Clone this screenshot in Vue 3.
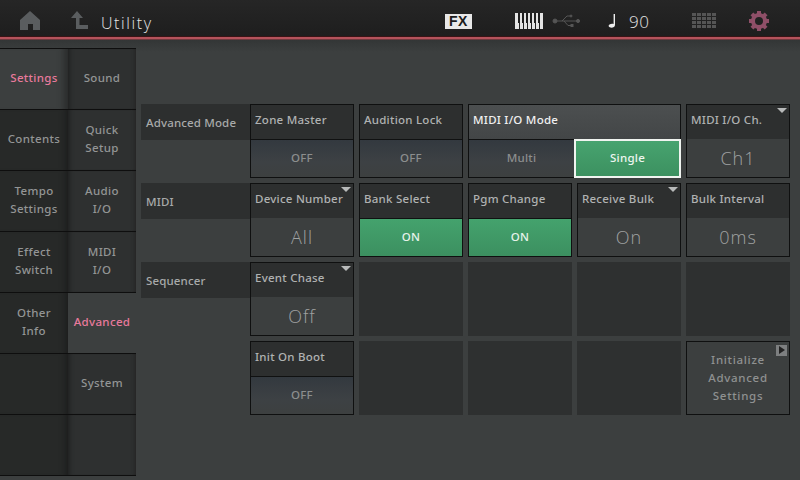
<script setup>
const col1 = [
  { t: ['Settings'], active: true }, { t: ['Contents'] }, { t: ['Tempo', 'Settings'] },
  { t: ['Effect', 'Switch'] }, { t: ['Other', 'Info'] }, { t: [] }, { t: [] }
]
const col2 = [
  { t: ['Sound'] }, { t: ['Quick', 'Setup'] }, { t: ['Audio', 'I/O'] }, { t: ['MIDI', 'I/O'] },
  { t: ['Advanced'], active: true }, { t: ['System'] }, { t: [] }
]
const rows = [
  { label: 'Advanced Mode', cells: [
    { h: 'Zone Master', v: 'OFF', k: 'off' },
    { h: 'Audition Lock', v: 'OFF', k: 'off' },
    { mode: true },
    { h: 'MIDI I/O Ch.', v: 'Ch1', k: 'big', menu: true }
  ] },
  { label: 'MIDI', cells: [
    { h: 'Device Number', v: 'All', k: 'big', menu: true },
    { h: 'Bank Select', v: 'ON', k: 'on' },
    { h: 'Pgm Change', v: 'ON', k: 'on' },
    { h: 'Receive Bulk', v: 'On', k: 'big', menu: true },
    { h: 'Bulk Interval', v: '0ms', k: 'big' }
  ] },
  { label: 'Sequencer', cells: [
    { h: 'Event Chase', v: 'Off', k: 'big', menu: true },
    { empty: true }, { empty: true }, { empty: true }, { empty: true }
  ] },
  { label: '', cells: [
    { h: 'Init On Boot', v: 'OFF', k: 'off' },
    { empty: true }, { empty: true }, { empty: true },
    { init: true }
  ] }
]
const keys = [0, 1, 2, 3, 4, 5, 6]
</script>

<template>
  <div class="screen">
    <header class="top">
      <svg class="home" width="22" height="22" viewBox="0 0 22 22"><path d="M11 1 L21 10 V20 H14 V14 H9 V20 H1 V10 Z" fill="#5a5d5f"/></svg>
      <svg class="up" width="20" height="22" viewBox="0 0 20 22"><path d="M8 1 L14 8 H10.5 V15 H19 V19 H7 V8 H2 Z" fill="#5a5d5f"/></svg>
      <span class="title">Utility</span>
      <span class="fx">FX</span>
      <svg class="piano" width="28" height="16" viewBox="0 0 28 16">
        <rect width="28" height="16" fill="#e4e4e4"/>
        <g fill="#1f1f1f">
          <rect v-for="x in [3, 7, 11, 15, 19, 23]" :key="x" :x="x" y="0" width="2" height="10"/>
          <rect v-for="x in [4, 8, 12, 16, 20, 24]" :key="'l' + x" :x="x" y="10" width="1" height="6"/>
        </g>
      </svg>
      <svg class="usb" width="29" height="14" viewBox="0 0 29 14">
        <g fill="#555" stroke="#555">
          <circle cx="3" cy="7" r="2"/><circle cx="26" cy="7" r="1.6"/>
          <path d="M4 7 H25 M10 7 L15 2 H18 M12 7 L16 11.5 H19" fill="none"/>
          <circle cx="19" cy="2" r="1"/><rect x="19" y="10.5" width="2" height="2"/>
        </g>
      </svg>
      <svg class="note" width="8" height="14" viewBox="0 0 8 14"><path d="M5.6 0 H7 V11 C7 13 4.5 14 2.5 13.6 C0.5 13.2 0 11.5 1.5 10.5 C2.8 9.6 4.5 9.5 5.6 10 Z" fill="#eee"/></svg>
      <span class="tempo">90</span>
      <svg class="grid-ic" width="24" height="16" viewBox="0 0 24 16">
        <g fill="#555">
          <template v-for="y in [0, 4, 8, 12]" :key="y">
            <rect v-for="x in [0, 5, 10, 15, 20]" :key="x" :x="x" :y="y" width="4" height="3"/>
          </template>
        </g>
      </svg>
      <svg class="gear" width="20" height="20" viewBox="0 0 20 20">
        <circle cx="10" cy="10" r="6" fill="none" stroke="#8f4f68" stroke-width="4"/>
        <g fill="#8f4f68">
          <rect v-for="a in [0, 45, 90, 135, 180, 225, 270, 315]" :key="a" x="8" y="0" width="4" height="4" :transform="`rotate(${a} 10 10)`"/>
        </g>
      </svg>
    </header>
    <div class="redline"></div>
    <div class="body">
      <nav class="side">
        <div class="col col1">
          <div v-for="k in keys" :key="k" class="tile" :class="{ active: col1[k].active }">
            <span v-for="l in col1[k].t" :key="l">{{ l }}</span>
          </div>
        </div>
        <div class="col col2">
          <div v-for="k in keys" :key="k" class="tile" :class="{ active: col2[k].active }">
            <span v-for="l in col2[k].t" :key="l">{{ l }}</span>
          </div>
        </div>
      </nav>
      <main class="panel">
        <div v-for="(r, i) in rows" :key="i" class="row">
          <div class="label"><div v-if="r.label" class="label-bar">{{ r.label }}</div></div>
          <div class="cells">
            <template v-for="(c, j) in r.cells" :key="j">
              <div v-if="c.mode" class="cell mode">
                <div class="head head-lit">MIDI I/O Mode</div>
                <div class="mode-vals">
                  <div class="val off multi">Multi</div>
                  <div class="val single">Single</div>
                </div>
              </div>
              <div v-else-if="c.empty" class="empty"></div>
              <div v-else-if="c.init" class="cell init">
                <span class="arrow"></span>
                <span>Initialize</span><span>Advanced</span><span>Settings</span>
              </div>
              <div v-else class="cell">
                <div class="head">{{ c.h }}<i v-if="c.menu" class="tri"></i></div>
                <div class="val" :class="c.k">{{ c.v }}</div>
              </div>
            </template>
          </div>
        </div>
      </main>
    </div>
  </div>
</template>

<style>
html, body { margin: 0; background: #3c3f3f; }
</style>

<style scoped>
.screen {
  width: 800px; height: 480px; overflow: hidden; display: flex; flex-direction: column;
  background: #3c3f3f; font-family: "Noto Sans", "Open Sans", sans-serif; font-size: 11.5px;
  font-weight: 500; letter-spacing: 0.25px;
}
.top {
  height: 36px; flex: none; box-sizing: border-box; padding-top: 6px;
  background: linear-gradient(#262626, #1e1e1e);
  display: flex; align-items: center; position: relative;
}
.home { margin-left: 19px; flex: none; }
.up { margin-left: 28px; flex: none; }
.title {
  margin-left: 12px; font-size: 16px; font-weight: 300; color: #e6e6e6; letter-spacing: 1.6px;
  font-family: "Open Sans", sans-serif; margin-top: 4px; width: 344px; flex: none;
}
.fx {
  width: 27px; height: 15px; background: #e8e8e8; color: #1c1c1c; font-family: "Liberation Sans", sans-serif;
  font-weight: 700; font-size: 14px; line-height: 15px; text-align: center; letter-spacing: 0.5px;
  flex: none;
}
.piano { margin-left: 43px; flex: none; }
.usb { margin-left: 9px; flex: none; }
.note { margin-left: 27px; flex: none; }
.tempo { margin-left: 13px; font-size: 17px; font-weight: 300; color: #e4e4e4; letter-spacing: 0.5px; width: 63px; flex: none; font-family: "Open Sans", sans-serif; }
.grid-ic { flex: none; }
.gear { margin-left: 33px; flex: none; }
.redline {
  height: 4px; flex: none; box-sizing: border-box; background: #b5535c;
  border-top: 1px solid #3a1416; border-bottom: 1px solid #6e3a3e;
}
.body { flex: 1; display: flex; min-height: 0; background: linear-gradient(#333636, #3c3f3f 12px); }
.side { width: 136px; flex: none; display: flex; padding-top: 8px; box-sizing: border-box; letter-spacing: 0.35px; }
.col { width: 68px; display: flex; flex-direction: column; }
.tile {
  height: 61px; flex: none; box-sizing: border-box; border-top: 1px solid #0e0e0e; padding-bottom: 2px;
  display: flex; flex-direction: column; align-items: center; justify-content: center;
  line-height: 18px; color: #939595; background: #272928;
}
.tile:last-child { height: 62px; border-bottom: 1px solid #0e0e0e; }
.col1 .tile { box-shadow: inset -8px 0 6px -6px #1b1c1c; }
.col1 .tile.active { background: #3c3f3f; box-shadow: inset -10px 0 6px -6px #2a2c2c; }
.col2 .tile { background: #2e3030; box-shadow: inset 6px 0 5px -5px #1c1d1d, inset -5px 0 4px -4px #222; }
.col2 .tile.active { background: #3c3f3f; box-shadow: none; }
.tile.active { color: #e87a9c; }
.panel {
  padding: 64px 0 0 5px; display: flex; flex-direction: column; gap: 5px; flex: 1;
}
.row { display: flex; }
.label { width: 109px; flex: none; }
.label-bar {
  height: 36px; background: #2d2f2f; color: #a8aaaa; line-height: 37px; padding-left: 5px; letter-spacing: 0.15px;
}
.cells { display: grid; grid-template-columns: repeat(5, 104px); grid-auto-rows: 74px; column-gap: 5px; }
.cell {
  border: 1px solid #0f1010; box-sizing: border-box; display: flex; flex-direction: column; min-width: 0;
  background: #3c3f3f;
}
.head {
  height: 34px; flex: none; background: #2d2f2f; color: #b0b2b2; line-height: 30px; padding-left: 4px;
  position: relative; white-space: nowrap; overflow: hidden;
}
.tri {
  position: absolute; right: 2px; top: 3px; width: 0; height: 0; border-left: 5px solid transparent;
  border-right: 5px solid transparent; border-top: 5px solid #b8baba;
}
.val { flex: 1; display: flex; align-items: center; justify-content: center; color: #8c8e8e; padding-bottom: 2px; }
.val.off { background: linear-gradient(#33393f, #3d4144 60%, #3d4040); border-top: 1px solid #101111; }
.val.on { color: #e6f2ea; border-top: 1px solid #101111; background: linear-gradient(#44a26d, #3c9060); }
.val.big { font-size: 18px; font-weight: 300; color: #a0a2a2; letter-spacing: 1px; padding-bottom: 0; font-family: "Open Sans", sans-serif; }
.mode { grid-column: span 2; width: 213px; }
.head-lit { background: linear-gradient(#4c4f50, #434647); color: #f0f0f0; border-bottom: 1px solid #101111; box-sizing: border-box; height: 35px; }
.mode-vals { flex: 1; display: flex; position: relative; }
.val.multi { width: 105px; flex: none; border-top: none; }
.single {
  width: 107px; box-sizing: border-box; margin: -1px -1px -1px 0; flex: none; border: 2px solid #f0f4f0;
  background: linear-gradient(#47a36f, #3c9160); color: #eef6f0;
}
.empty { background: #2e3030; }
.init {
  align-items: center; justify-content: center; line-height: 18px; color: #8f9191; position: relative;
  letter-spacing: 0.7px;
}
.arrow {
  position: absolute; right: 2px; top: 3px; width: 11px; height: 11px; background: #7d7f80;
}
.arrow::after {
  content: ""; position: absolute; left: 3px; top: 1px; border-left: 6px solid #222;
  border-top: 4px solid transparent; border-bottom: 4px solid transparent;
}
</style>
